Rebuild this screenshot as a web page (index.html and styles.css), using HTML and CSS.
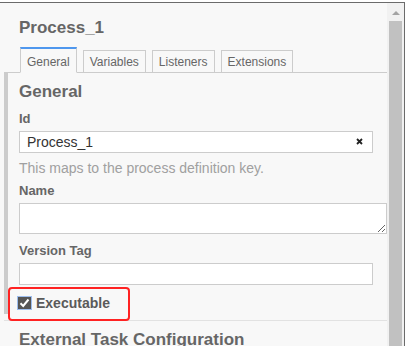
FILE: index.html
```html
<!DOCTYPE html>
<html lang="en">
<head>
    <meta charset="UTF-8">
    <meta name="viewport" content="width=device-width, initial-scale=1.0">
    <title>Properties Panel</title>
    <link rel="stylesheet" href="styles.css">
</head>
<body>
    <div class="window">
        <div class="panel">
            <div class="header">Process_1</div>
            <div class="tabs">
                <div class="tab active">General</div>
                <div class="tab">Variables</div>
                <div class="tab">Listeners</div>
                <div class="tab">Extensions</div>
            </div>

            <!-- General group -->
            <div class="group open">
                <div class="group-title">General</div>
                <div class="field field-id">
                    <div class="label">Id</div>
                    <div class="input-wrap">
                        <input class="input" type="text" value="Process_1">
                        <span class="clear">
                            <svg width="7" height="7" viewBox="0 0 7 7"><path d="M1 1L6 6M6 1L1 6" stroke="#222" stroke-width="1.8" fill="none"/></svg>
                        </span>
                    </div>
                    <div class="desc">This maps to the process definition key.</div>
                </div>
                <div class="field field-name">
                    <div class="label">Name</div>
                    <textarea class="textarea"></textarea>
                </div>
                <div class="field field-version">
                    <div class="label">Version Tag</div>
                    <input class="input" type="text" value="">
                </div>
                <div class="check-row">
                    <span class="checkbox">
                        <svg width="11" height="10" viewBox="0 0 11 10"><path d="M1.5 5.2L4.2 8L9.5 1.5" stroke="#fff" stroke-width="2" fill="none"/></svg>
                    </span>
                    <span class="check-label">Executable</span>
                    <div class="highlight"></div>
                </div>
            </div>

            <div class="group">
                <div class="group-title">External Task Configuration</div>
            </div>
        </div>
        <div class="scrollbar">
            <div class="arrow"></div>
            <div class="thumb"></div>
        </div>
    </div>
</body>
</html>
```

FILE: styles.css
```css
body {
    margin: 0;
    background-color: #fff;
    font-family: "Liberation Sans", Arial, sans-serif;
}
.window {
    display: flex;
    width: 405px;
    height: 344px;
    margin-top: 2px;
    border-top: 1px solid #6b6b6b;
    border-right: 1px solid #6b6b6b;
    box-sizing: border-box;
    overflow: hidden;
}
.panel {
    flex: 1;
    background-color: #f8f8f8;
    color: #666;
}
.header {
    padding: 15px 0 0 19px;
    font-size: 17px;
    line-height: 20px;
    font-weight: bold;
}
.tabs {
    display: flex;
    align-items: flex-end;
    margin: 9px 0 0 4px;
    padding-left: 16px;
    border-bottom: 1px solid #ccc;
}
.tab {
    margin-bottom: -1px;
    margin-right: 6px;
    padding: 1px 6px 0;
    font-size: 12px;
    line-height: 20px;
    border: 1px solid #ccc;
    background-color: #f8f8f8;
}
.tab.active {
    padding-top: 3px;
    border-top: 2px solid #4f97ee;
    border-bottom-color: #f8f8f8;
}
.group {
    margin-left: 4px;
    padding: 9px 14px 1px 11px;
}
.group.open {
    border-left: 4px solid #ccc;
}
.group + .group {
    margin-top: 6px;
    border-top: 1px solid #e2e2e2;
    padding-left: 15px;
}
.group-title {
    font-size: 17px;
    line-height: 20px;
    font-weight: bold;
}
.field {
    margin-top: 9px;
}
.field-name {
    margin-top: 5px;
}
.label {
    font-size: 13px;
    line-height: 16px;
    font-weight: bold;
    margin-bottom: 4px;
}
.input-wrap {
    position: relative;
}
.input {
    display: block;
    width: 100%;
    height: 22px;
    box-sizing: border-box;
    margin: 0;
    padding: 0 7px;
    border: 1px solid #ccc;
    background-color: #fff;
    font-family: "Liberation Sans", Arial, sans-serif;
    font-size: 14px;
    color: #333;
    outline: none;
}
.clear {
    position: absolute;
    right: 10px;
    top: 7px;
    width: 7px;
    height: 7px;
    display: flex;
}
.desc {
    margin-top: 5px;
    font-size: 14px;
    line-height: 20px;
    color: #a0a0a0;
}
.textarea {
    display: block;
    width: calc(100% + 14px);
    height: 31px;
    box-sizing: border-box;
    margin: 0;
    border: 1px solid #ccc;
    background-color: #fff;
    resize: vertical;
    outline: none;
}
.check-row {
    position: relative;
    display: flex;
    align-items: center;
    margin-top: 8px;
    margin-left: -2px;
    height: 20px;
}
.checkbox {
    display: flex;
    justify-content: center;
    align-items: center;
    width: 15px;
    height: 14px;
    box-sizing: border-box;
    border: 1px solid #9dbdee;
    background-color: #555;
}
.check-label {
    margin-left: 4px;
    font-size: 14px;
    font-weight: bold;
    color: #5a5a5a;
}
.highlight {
    position: absolute;
    left: -9px;
    top: -6px;
    width: 122px;
    height: 34px;
    box-sizing: border-box;
    border: 2px solid #f22;
    border-radius: 4px;
}
.scrollbar {
    width: 17px;
    background-color: #f1f1f1;
    display: flex;
    flex-direction: column;
    align-items: center;
}
.arrow {
    margin-top: 8px;
    width: 0;
    height: 0;
    border-left: 4px solid transparent;
    border-right: 4px solid transparent;
    border-bottom: 4px solid #a3a3a3;
}
.thumb {
    margin-top: 6px;
    width: 13px;
    flex: 1;
    background-color: #c1c1c1;
}
```
